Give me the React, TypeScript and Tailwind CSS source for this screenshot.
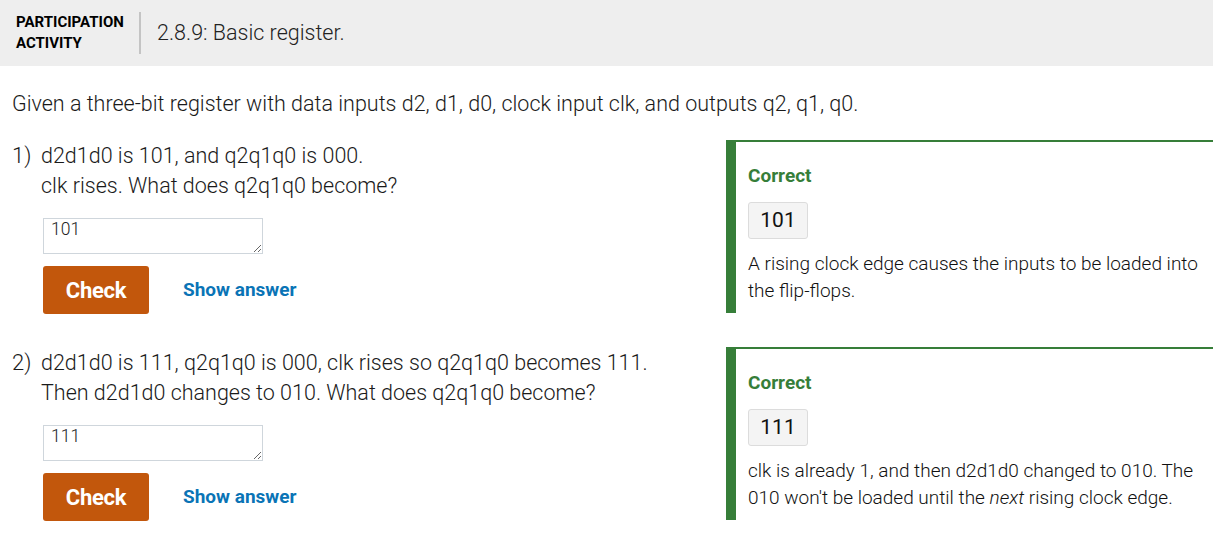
import type { ReactNode } from 'react'

type Question = {
  num: string
  lines: [string, string]
  value: string
  answer: string
  explanation: ReactNode
}

const QUESTIONS: Question[] = [
  {
    num: '1)',
    lines: ['d2d1d0 is 101, and q2q1q0 is 000.', 'clk rises. What does q2q1q0 become?'],
    value: '101',
    answer: '101',
    explanation: 'A rising clock edge causes the inputs to be loaded into the flip-flops.',
  },
  {
    num: '2)',
    lines: [
      'd2d1d0 is 111, q2q1q0 is 000, clk rises so q2q1q0 becomes 111.',
      'Then d2d1d0 changes to 010. What does q2q1q0 become?',
    ],
    value: '111',
    answer: '111',
    explanation: (
      <>
        clk is already 1, and then d2d1d0 changed to 010. The 010 won't be loaded until the <em>next</em>{' '}
        rising clock edge.
      </>
    ),
  },
]

function QuestionRow({ q }: { q: Question }) {
  return (
    <div className="flex items-start">
      <div className="flex flex-1 pl-3">
        <span className="w-[29px] text-[22px] leading-[30px] pt-[1px]">{q.num}</span>
        <div className="flex flex-col">
          <p className="text-[21.5px] leading-[30px] pt-[1px]">{q.lines[0]}</p>
          <p className="text-[21.5px] leading-[30px]">{q.lines[1]}</p>
          <textarea
            readOnly
            defaultValue={q.value}
            className="ml-[2px] mt-[17px] h-[36px] w-[220px] border border-[#cfd6dc] bg-white px-[7px] py-0 text-[17.5px] font-light leading-5 text-[#222] outline-none"
          />
          <div className="ml-[2px] mt-[12px] flex items-center">
            <button
              type="button"
              className="h-[48px] w-[106px] rounded-[3px] bg-[#c2570c] text-[22px] font-bold tracking-[-0.3px] text-white"
            >
              Check
            </button>
            <button
              type="button"
              className="ml-[34px] text-[19px] font-bold text-[#0a74b6]"
            >
              Show answer
            </button>
          </div>
        </div>
      </div>
      <div className="w-[487px] border-l-[10px] border-t-2 border-[#367e39] pl-3 pr-3 pt-[22px] pb-[9px]">
        <p className="text-[19px] font-bold leading-6 text-[#367e39]">Correct</p>
        <div className="mt-[14px] flex h-[37px] w-[60px] items-center justify-center rounded-[3px] border border-[#dcdcdc] bg-[#f4f4f4] text-[21px] font-normal text-[#111]">
          {q.answer}
        </div>
        <p className="mt-[11px] text-[19px] leading-[27px] text-[#111]">{q.explanation}</p>
      </div>
    </div>
  )
}

export default function App() {
  return (
    <div
      className="min-h-[552px] w-[1213px] bg-white font-light text-[#1a1a1a]"
      style={{ fontFamily: 'Roboto, "Noto Sans", sans-serif' }}
    >
      <header className="flex h-[66px] items-center bg-[#eeeeee]">
        <div className="w-[139px] pl-4 text-[15px] font-bold leading-[21px] text-black">
          PARTICIPATION
          <br />
          ACTIVITY
        </div>
        <div className="h-[42px] w-[2px] bg-[#c4c4c4]" />
        <h2 className="ml-4 text-[21.5px] font-light text-[#222]">2.8.9: Basic register.</h2>
      </header>

      <p className="pl-3 pt-[24px] text-[21.5px] leading-7">
        Given a three-bit register with data inputs d2, d1, d0, clock input clk, and outputs q2, q1, q0.
      </p>

      <div className="mt-[22px] flex flex-col gap-[33px]">
        {QUESTIONS.map((q) => (
          <QuestionRow key={q.num} q={q} />
        ))}
      </div>
    </div>
  )
}
